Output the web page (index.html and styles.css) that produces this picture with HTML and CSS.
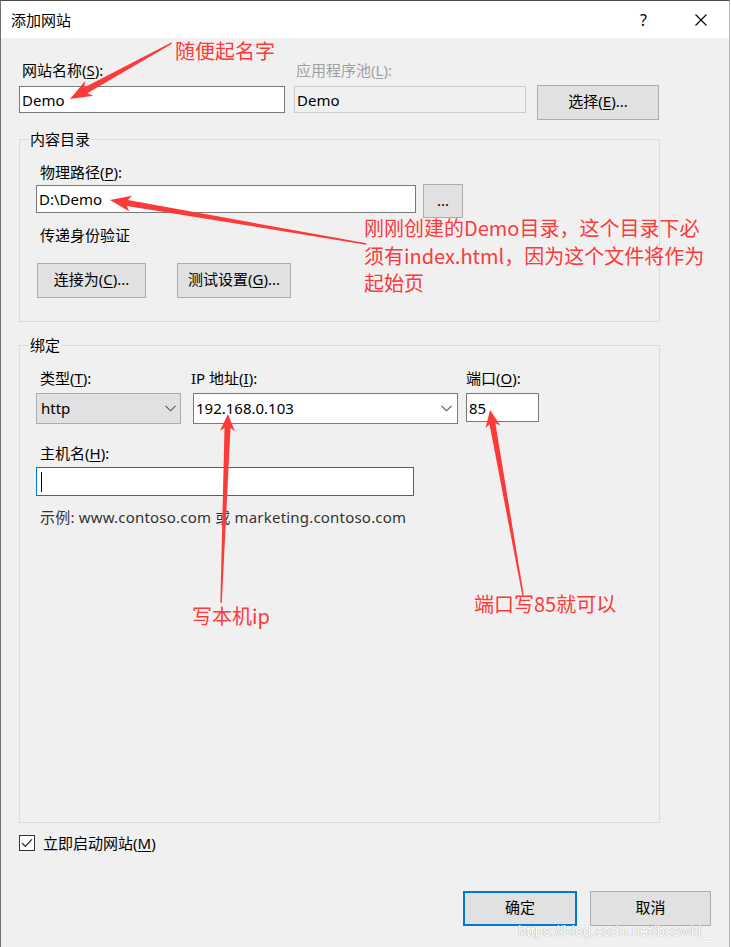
FILE: index.html
```html
<!DOCTYPE html>
<html lang="zh-CN">
<head>
<meta charset="utf-8">
<title>添加网站</title>
<link rel="stylesheet" href="styles.css">
</head>
<body>
<div class="window">
  <header class="titlebar">
    <span class="title">添加网站</span>
    <span class="help">?</span>
    <svg class="close" width="12" height="12" viewBox="0 0 12 12"><path d="M0.5 0.5L11.5 11.5M11.5 0.5L0.5 11.5" stroke="#000" stroke-width="1.1" fill="none"/></svg>
  </header>
  <main class="dialog">
    <div class="site-row">
      <div class="field">
        <label class="lbl">网站名称(<u>S</u>):</label>
        <div class="input w-name">Demo</div>
      </div>
      <div class="field f-pool">
        <label class="lbl disabled">应用程序池(<u>L</u>):</label>
        <div class="input input-dis w-pool">Demo</div>
      </div>
      <button class="btn b-select">选择(<u>E</u>)...</button>
    </div>

    <fieldset class="group g-content">
      <legend>内容目录</legend>
      <div class="gbody gb-content">
        <label class="lbl l-in">物理路径(<u>P</u>):</label>
        <div class="path-row">
          <div class="input w-path">D:\Demo</div>
          <button class="btn b-browse">...</button>
        </div>
        <div class="lbl l-in pass">传递身份验证</div>
        <div class="btn-row">
          <button class="btn b-connect">连接为(<u>C</u>)...</button>
          <button class="btn b-test">测试设置(<u>G</u>)...</button>
        </div>
      </div>
    </fieldset>

    <fieldset class="group g-binding">
      <legend>绑定</legend>
      <div class="gbody gb-binding">
        <div class="bind-row">
          <div class="field c-type">
            <label class="lbl l-in">类型(<u>T</u>):</label>
            <div class="select sel-type"><span>http</span><svg class="chev" width="11" height="7" viewBox="0 0 11 7"><path d="M0.5 0.8L5.5 5.8L10.5 0.8" stroke="#555" stroke-width="1.1" fill="none"/></svg></div>
          </div>
          <div class="field c-ip">
            <label class="lbl l-ip">IP 地址(<u>I</u>):</label>
            <div class="select sel-ip"><span>192.168.0.103</span><svg class="chev" width="11" height="7" viewBox="0 0 11 7"><path d="M0.5 0.8L5.5 5.8L10.5 0.8" stroke="#555" stroke-width="1.1" fill="none"/></svg></div>
          </div>
          <div class="field c-port">
            <label class="lbl l-port">端口(<u>O</u>):</label>
            <div class="input w-port">85</div>
          </div>
        </div>
        <label class="lbl l-in host-lbl">主机名(<u>H</u>):</label>
        <div class="input input-focus w-host"><span class="caret"></span></div>
        <div class="lbl l-in example">示例: www.contoso.com 或 marketing.contoso.com</div>
      </div>
    </fieldset>

    <div class="check-row">
      <svg class="checkbox" width="16" height="16" viewBox="0 0 16 16"><rect x="0.5" y="0.5" width="15" height="15" fill="#fff" stroke="#333"/><path d="M3.2 8.3L6.4 11.4L12.8 4.4" stroke="#222" stroke-width="1.2" fill="none"/></svg>
      <span class="check-lbl">立即启动网站(<u>M</u>)</span>
    </div>

    <div class="actions">
      <button class="btn b-ok">确定</button>
      <button class="btn b-cancel">取消</button>
    </div>
  </main>

  <div class="overlay">
    <svg class="arrows" width="731" height="947" viewBox="0 0 731 947">
      <g fill="#fc3a3a">
        <polygon transform="translate(70,99) rotate(151.2)" points="0,0 -22,-8.5 -18,-3.2 -116,-0.7 -116,0.7 -18,3.2 -22,8.5"/>
        <polygon transform="translate(110,200) rotate(189.75)" points="0,0 -21,-8 -17.5,-3 -260,-0.7 -260,0.7 -17.5,3 -21,8"/>
        <polygon transform="translate(228,414) rotate(-87.9)" points="0,0 -17,-7.5 -14,-3 -189,-0.7 -189,0.7 -14,3 -17,7.5"/>
        <polygon transform="translate(490,410) rotate(-100.1)" points="0,0 -17,-7.5 -14,-3 -188,-0.7 -188,0.7 -14,3 -17,7.5"/>
      </g>
    </svg>
    <div class="note n1">随便起名字</div>
    <div class="note n2">刚刚创建的Demo目录，这个目录下必<br>须有index.html，因为这个文件将作为<br>起始页</div>
    <div class="note n3">写本机ip</div>
    <div class="note n4">端口写85就可以</div>
    <div class="watermark">https://blog.csdn.net/bcswkl_</div>
  </div>
</div>
</body>
</html>
```

FILE: styles.css
```css
* { box-sizing: border-box; }

body {
  margin: 0;
  background: #ffffff;
  font-family: "Noto Sans", "Noto Sans CJK SC", sans-serif;
  font-size: 15px;
  color: #000;
}

u { text-decoration: underline; text-underline-offset: 2px; text-decoration-thickness: 1px; }

.window {
  position: relative;
  width: 730px;
  height: 947px;
  background: #f0f0f0;
  border-left: 1px solid #707070;
  border-right: 1px solid #b9b9b9;
  border-top: 1px solid #4a4a4a;
  overflow: hidden;
}

/* title bar */
.titlebar {
  height: 37px;
  background: #ffffff;
  display: flex;
  align-items: center;
  padding: 0 22px 0 10px;
}
.title { line-height: 20px; }
.help { margin-left: auto; font-size: 16px; line-height: 20px; margin-right: 48px; }
.close { display: block; }

/* dialog body */
.dialog { padding: 22px 18px 0 18px; }

.lbl {
  display: block;
  height: 20px;
  line-height: 20px;
  padding-left: 3px;
  white-space: nowrap;
}
.disabled { color: #a0a0a0; padding-left: 2px; }

.site-row { display: flex; align-items: flex-start; }
.site-row .lbl { margin-bottom: 6px; }
.f-pool { margin-left: 9px; }

.input {
  height: 27px;
  border: 1px solid #7a7a7a;
  background: #ffffff;
  display: flex;
  align-items: center;
  padding-left: 2px;
  line-height: 20px;
  white-space: nowrap;
}
.input-dis { background: #f0f0f0; border-color: #cccccc; }
.input-focus { border-color: #0078d7; }
.w-name { width: 266px; }
.w-pool { width: 232px; }

.btn {
  font: inherit;
  color: #000;
  background: #e1e1e1;
  border: 1px solid #adadad;
  padding: 0 0 3px 0;
  margin: 0;
  height: 35px;
  line-height: 20px;
  display: flex;
  align-items: center;
  justify-content: center;
}
.b-select { width: 122px; margin-left: 11px; margin-top: 25px; }

/* group boxes */
.group {
  margin: 0;
  width: 641px;
  border: 1px solid #dcdcdc;
  padding: 0;
}
.group legend {
  margin-left: 9px;
  padding: 0 1px;
  line-height: 20px;
  height: 20px;
}
.gbody { padding-left: 16px; }
.l-in { padding-left: 4px; }

.g-content { margin-top: 9px; }
.gb-content { padding-top: 13px; padding-bottom: 23px; }
.path-row { display: flex; align-items: flex-start; margin-top: 2px; }
.w-path { width: 380px; height: 28px; margin-top: 1px; }
.b-browse { width: 40px; height: 34px; margin-left: 7px; }
.pass { margin-top: 7px; }
.btn-row { display: flex; margin-top: 18px; }
.b-connect { width: 109px; margin-left: 1px; }
.b-test { width: 114px; margin-left: 31px; }

.g-binding { margin-top: 13px; height: 488px; }
.gb-binding { padding-top: 13px; }
.bind-row { display: flex; align-items: flex-start; }
.bind-row .lbl { margin-bottom: 5px; }
.c-type { width: 145px; }
.c-ip { width: 265px; margin-left: 12px; }
.c-port { width: 73px; margin-left: 8px; }
.l-ip { padding-left: 0; margin-left: -2px; }
.l-port { padding-left: 0; }

.select {
  height: 31px;
  display: flex;
  align-items: center;
  justify-content: space-between;
  line-height: 20px;
  padding-bottom: 1px;
}
.sel-type { background: #e1e1e1; border: 1px solid #adadad; padding: 0 4px 1px 4px; }
.sel-ip { background: #ffffff; border: 1px solid #7a7a7a; padding: 0 5px 1px 2px; }
.chev { display: block; }
.w-port { width: 73px; height: 29px; }

.host-lbl { margin-top: 19px; margin-bottom: 4px; }
.w-host { width: 378px; height: 29px; padding-left: 4px; }
.caret { display: block; width: 1px; height: 20px; background: #000; }
.example { margin-top: 11px; color: #333333; letter-spacing: 0.2px; }

/* bottom */
.check-row { display: flex; align-items: center; height: 20px; margin-top: 10px; }
.checkbox { display: block; }
.check-lbl { margin-left: 8px; line-height: 20px; }

.actions { display: flex; justify-content: flex-end; margin-top: 38px; }
.b-ok { width: 114px; border: 2px solid #0078d7; }
.b-cancel { width: 121px; margin-left: 13px; }

/* annotation overlay */
.overlay {
  position: absolute;
  left: -1px;
  top: -1px;
  width: 731px;
  height: 947px;
  pointer-events: none;
}
.arrows { position: absolute; left: 0; top: 0; }
.note {
  position: absolute;
  font-family: "Noto Sans CJK SC", sans-serif;
  font-size: 20px;
  line-height: 28px;
  color: #fc3a3a;
  white-space: nowrap;
}
.n1 { left: 175px; top: 37px; }
.n2 { left: 364px; top: 214px; line-height: 27.5px; }
.n3 { left: 192px; top: 602px; }
.n4 { left: 474px; top: 590px; }
.watermark {
  position: absolute;
  left: 518px;
  top: 921px;
  font-family: "Liberation Sans", sans-serif;
  font-size: 15px;
  line-height: 20px;
  color: #ffffff;
  text-shadow: 0 0 1px rgba(0,0,0,0.45);
}
```
